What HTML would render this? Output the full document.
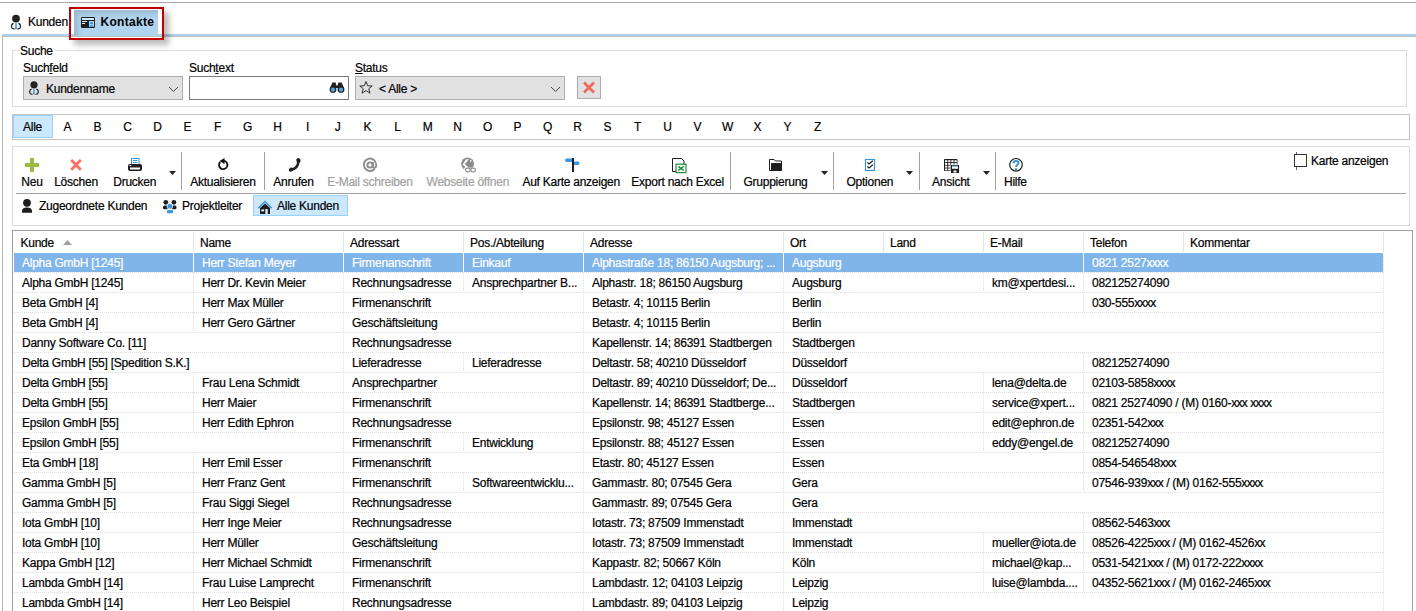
<!DOCTYPE html>
<html><head><meta charset="utf-8"><style>
html,body{margin:0;padding:0;background:#fff;width:1416px;height:611px;overflow:hidden;position:relative}
.t{position:absolute;font-family:"Liberation Sans", sans-serif;font-size:12px;line-height:14px;white-space:nowrap;z-index:5;letter-spacing:-0.25px;-webkit-text-stroke:0.2px currentColor}
.x{letter-spacing:-0.7px}
u{text-decoration:underline;text-underline-offset:1px}
svg.g{position:absolute;left:0;top:0;z-index:0}
</style></head><body>
<svg class="g" width="1416" height="611" viewBox="0 0 1416 611" shape-rendering="auto">
<line x1="0" y1="2.5" x2="1416" y2="2.5" stroke="#a8a8a8" stroke-width="1"/>
<rect x="2" y="34" width="1414" height="2" fill="#aad2f0" />
<line x1="2" y1="36.5" x2="1416" y2="36.5" stroke="#c0c0c0" stroke-width="1"/>
<line x1="2.5" y1="36" x2="2.5" y2="611" stroke="#b4b4b4" stroke-width="1"/>
<g><circle cx="16" cy="18.6" r="3.9" fill="#222"/><path d="M13.6,23.4 C12,23.9 11.3,25.5 11.5,27 C11.7,28.5 13,29.1 14.6,28.9 M18.4,23.4 C20,23.9 20.7,25.5 20.5,27 C20.3,28.5 19,29.1 17.4,28.9" fill="none" stroke="#222" stroke-width="1.2"/><path d="M15.3,22.6 L16.7,22.6 L17,29.2 L15,29.2 Z" fill="#4aa0e0"/></g>
<line x1="12" y1="50.5" x2="20" y2="50.5" stroke="#dcdcdc" stroke-width="1"/>
<line x1="54" y1="50.5" x2="1407" y2="50.5" stroke="#dcdcdc" stroke-width="1"/>
<line x1="12" y1="106.5" x2="1407" y2="106.5" stroke="#dcdcdc" stroke-width="1"/>
<line x1="12.5" y1="50" x2="12.5" y2="107" stroke="#dcdcdc" stroke-width="1"/>
<line x1="1406.5" y1="50" x2="1406.5" y2="107" stroke="#dcdcdc" stroke-width="1"/>
<rect x="23.5" y="76.5" width="159" height="23" fill="#e1e1e1" stroke="#adadad" stroke-width="1" />
<g><circle cx="34" cy="84.8" r="3.6" fill="#222"/><path d="M31.7,89 C30.2,89.5 29.5,91 29.7,92.4 C29.9,93.8 31.1,94.4 32.6,94.2 M36.3,89 C37.8,89.5 38.5,91 38.3,92.4 C38.1,93.8 36.9,94.4 35.4,94.2" fill="none" stroke="#222" stroke-width="1.15"/><path d="M33.35,88.3 L34.65,88.3 L34.9,94.5 L33.1,94.5 Z" fill="#4aa0e0"/></g>
<path d="M169,87 L173.5,91.5 L178,87" fill="none" stroke="#444" stroke-width="1"/>
<rect x="189.5" y="76.5" width="159" height="23" fill="#fff" stroke="#7a7a7a" stroke-width="1" />
<g><path d="M330.2,88 L332.3,82.6 L335.6,82.6 L336.4,85.4 L337.6,85.4 L338.4,82.6 L341.7,82.6 L343.8,88 Z" fill="#222"/><circle cx="333" cy="89.4" r="3.4" fill="#222"/><circle cx="341" cy="89.4" r="3.4" fill="#222"/><circle cx="333" cy="89.7" r="2.1" fill="#4aa8ee"/><circle cx="341" cy="89.7" r="2.1" fill="#4aa8ee"/></g>
<rect x="355.5" y="76.5" width="209" height="23" fill="#e1e1e1" stroke="#adadad" stroke-width="1" />
<path d="M366,81.5 L367.7,85.8 L372.2,86 L368.7,88.8 L370,93.2 L366,90.6 L362,93.2 L363.3,88.8 L359.8,86 L364.3,85.8 Z" fill="none" stroke="#333" stroke-width="1"/>
<path d="M551,87 L555.5,91.5 L560,87" fill="none" stroke="#444" stroke-width="1"/>
<rect x="577.5" y="76.5" width="23" height="22" fill="#e1e1e1" stroke="#adadad" stroke-width="1" />
<path d="M584,82.5 L594,92.5 M594,82.5 L584,92.5" stroke="#f06a5a" stroke-width="2.6"/>
<rect x="12.5" y="114.5" width="1397" height="25" fill="#fff" stroke="#c4c4c4" stroke-width="1" />
<rect x="13.5" y="115.5" width="39" height="22" fill="#cce8ff" stroke="#99d1ff" stroke-width="1" />
<line x1="12" y1="146.5" x2="1410" y2="146.5" stroke="#dcdcdc" stroke-width="1"/>
<line x1="12" y1="225.5" x2="1410" y2="225.5" stroke="#dcdcdc" stroke-width="1"/>
<line x1="12.5" y1="146" x2="12.5" y2="226" stroke="#dcdcdc" stroke-width="1"/>
<line x1="1409.5" y1="146" x2="1409.5" y2="226" stroke="#dcdcdc" stroke-width="1"/>
<line x1="16" y1="193.5" x2="1406" y2="193.5" stroke="#a0a0a0" stroke-width="1"/>
<line x1="181.5" y1="152" x2="181.5" y2="190" stroke="#a0a0a0" stroke-width="1"/>
<line x1="264.5" y1="152" x2="264.5" y2="190" stroke="#a0a0a0" stroke-width="1"/>
<line x1="730.5" y1="152" x2="730.5" y2="190" stroke="#a0a0a0" stroke-width="1"/>
<line x1="833.5" y1="152" x2="833.5" y2="190" stroke="#a0a0a0" stroke-width="1"/>
<line x1="919.5" y1="152" x2="919.5" y2="190" stroke="#a0a0a0" stroke-width="1"/>
<line x1="995.5" y1="152" x2="995.5" y2="190" stroke="#a0a0a0" stroke-width="1"/>
<path d="M169,171 L176,171 L172.5,175 Z" fill="#222"/>
<path d="M821,171 L828,171 L824.5,175 Z" fill="#222"/>
<path d="M983,171 L990,171 L986.5,175 Z" fill="#222"/>
<path d="M906,171 L913,171 L909.5,175 Z" fill="#222"/>
<path d="M30,158 h4 v5 h5 v4 h-5 v5 h-4 v-5 h-5 v-4 h5 Z" fill="#9bbb45"/>
<path d="M71.2,160 L80.8,169.8 M80.8,160 L71.2,169.8" stroke="#ff7060" stroke-width="2.8"/>
<g><rect x="131.5" y="158.5" width="7.5" height="6" fill="#fff" stroke="#3a96dd" stroke-width="1"/><line x1="133" y1="160.5" x2="137.5" y2="160.5" stroke="#3a96dd"/><line x1="133" y1="162.5" x2="137.5" y2="162.5" stroke="#3a96dd"/><rect x="128" y="164" width="14" height="7" rx="2" fill="#1e1e1e"/><rect x="130" y="167.5" width="10" height="2" fill="#fff"/><rect x="129.5" y="165" width="1.8" height="1" fill="#fff"/></g>
<g><path d="M220.2,162 A4.2,4.2 0 1 0 224,160.8" fill="none" stroke="#111" stroke-width="1.8"/><path d="M224.5,158 L219.5,161 L224.5,164 Z" fill="#111"/></g>
<g fill="#1e1e1e"><path d="M298.3,161.5 C298.3,165 296,168.5 291.5,169.8" fill="none" stroke="#1e1e1e" stroke-width="2.5"/><ellipse cx="298.4" cy="160.4" rx="2.1" ry="2.5" transform="rotate(-25 298.4 160.4)"/><ellipse cx="291" cy="169.6" rx="2.4" ry="1.8" transform="rotate(-30 291 169.6)"/></g>
<g fill="none" stroke="#8c8c8c" stroke-width="1.9"><path d="M374.5,169 A6.2,6.2 0 1 1 376.2,164.5 L376.2,166 C376.2,168 373.5,168.5 373,166.5 L373,162"/><circle cx="370" cy="165" r="2.6"/></g>
<g><circle cx="467.6" cy="163.8" r="6.4" fill="#8c8c8c"/><path d="M465.8,159.6 L468.6,159 L466.8,162 L464.6,164 L467.6,166.6 L469.6,168.2 L466,170.5 L464.2,168.6 L465.4,167 L462.6,164.6 Z" fill="#fff"/><path d="M469.8,159.6 L471.8,160.8 L470.2,162.2 Z" fill="#fff"/><rect x="464.6" y="167.6" width="11.4" height="5" fill="#fff"/><rect x="465.6" y="168.2" width="4.6" height="3.6" rx="1.8" fill="none" stroke="#8c8c8c" stroke-width="1.2"/><rect x="470.8" y="168.2" width="4.6" height="3.6" rx="1.8" fill="none" stroke="#8c8c8c" stroke-width="1.2"/></g>
<g><rect x="572" y="158" width="2" height="14" fill="#1e1e1e"/><path d="M572,158.6 L566,158.6 L564.8,160.3 L566,162 L572,162 Z" fill="#3a96dd"/><path d="M574,161.6 L578.5,161.6 L579.7,163.3 L578.5,165 L574,165 Z" fill="#3a96dd"/></g>
<g><path d="M672.5,158.5 L681.5,158.5 L684,161 L684,171.5 L672.5,171.5 Z" fill="#fff" stroke="#1e1e1e" stroke-width="1"/><rect x="676" y="164.2" width="10" height="8.4" fill="#fff" stroke="#1e8c3c" stroke-width="1.2"/><path d="M678.3,166.3 L683.7,170.5 M683.7,166.3 L678.3,170.5" stroke="#1e8c3c" stroke-width="1.5"/></g>
<g><path d="M769.5,159.5 L774,159.5 L775.5,161 L781.5,161 L781.5,170.5 L769.5,170.5 Z" fill="#fff" stroke="#1e1e1e" stroke-width="1"/><rect x="771" y="163" width="11" height="8" rx="0.8" fill="#1e1e1e"/></g>
<g><rect x="865.5" y="159.5" width="9" height="11" fill="#fff" stroke="#3a96dd" stroke-width="1.2"/><path d="M867.3,162.5 L869,164 L872.8,160.8 M867.3,166.5 L869,168 L872.8,164.8" fill="none" stroke="#1e1e1e" stroke-width="1.2"/></g>
<g><rect x="944" y="159" width="13.5" height="12" rx="0.8" fill="#1e1e1e"/><g fill="#fff"><rect x="945.0" y="160.2" width="2.3" height="1.9"/><rect x="945.0" y="162.95" width="2.3" height="1.9"/><rect x="945.0" y="165.7" width="2.3" height="1.9"/><rect x="945.0" y="168.45" width="2.3" height="1.9"/><rect x="948.15" y="160.2" width="2.3" height="1.9"/><rect x="948.15" y="162.95" width="2.3" height="1.9"/><rect x="948.15" y="165.7" width="2.3" height="1.9"/><rect x="948.15" y="168.45" width="2.3" height="1.9"/><rect x="951.3" y="160.2" width="2.3" height="1.9"/><rect x="951.3" y="162.95" width="2.3" height="1.9"/><rect x="951.3" y="165.7" width="2.3" height="1.9"/><rect x="951.3" y="168.45" width="2.3" height="1.9"/><rect x="954.45" y="160.2" width="2.3" height="1.9"/><rect x="954.45" y="162.95" width="2.3" height="1.9"/><rect x="954.45" y="165.7" width="2.3" height="1.9"/><rect x="954.45" y="168.45" width="2.3" height="1.9"/></g><rect x="950.5" y="164.5" width="9" height="9" fill="#fff"/><rect x="951" y="165" width="8" height="8" fill="#1e1e1e"/><rect x="952" y="165.8" width="6" height="3" fill="#fff"/><rect x="952" y="165.8" width="6" height="0.8" fill="#3a96dd"/><rect x="953.5" y="170.5" width="3" height="2" fill="#fff"/></g>
<g><circle cx="1016" cy="164.8" r="6.3" fill="#fff" stroke="#1e1e1e" stroke-width="1.2"/><path d="M1013.5,163 C1013.5,160.2 1018.5,160.2 1018.5,163 C1018.5,164.8 1016,164.8 1016,167" fill="none" stroke="#3a96dd" stroke-width="2"/><rect x="1015" y="168.2" width="2" height="2" fill="#3a96dd"/></g>
<rect x="1294.5" y="154.5" width="12" height="12" fill="#fff" stroke="#333" stroke-width="1" />
<line x1="1296.5" y1="152" x2="1296.5" y2="154" stroke="#666" stroke-width="1"/>
<line x1="1296.5" y1="167" x2="1296.5" y2="170" stroke="#666" stroke-width="1"/>
<g><circle cx="27" cy="202.8" r="3.9" fill="#1e1e1e"/><path d="M22,212.7 C21.5,208.5 24,207.4 27,207.4 C30,207.4 32.5,208.5 32,212.7 Z" fill="#1e1e1e"/></g>
<g><circle cx="165.8" cy="202.3" r="2.4" fill="#1e1e1e"/><circle cx="173.9" cy="202.3" r="2.4" fill="#1e1e1e"/><rect x="163" y="205.5" width="5" height="3.8" rx="1.5" fill="#1e1e1e"/><rect x="171.5" y="205.5" width="5" height="3.8" rx="1.5" fill="#1e1e1e"/><circle cx="169.9" cy="206.3" r="3.1" fill="#fff"/><circle cx="169.9" cy="206.3" r="2.5" fill="#3a96dd"/><rect x="166.8" y="210" width="6.3" height="3.2" rx="1.3" fill="#3a96dd"/></g>
<rect x="253.5" y="195.5" width="94" height="20" fill="#cce8ff" stroke="#99d1ff" stroke-width="1" />
<g><path d="M258.2,208.3 L265,201.6 L271.8,208.3" fill="none" stroke="#3a96dd" stroke-width="1.4"/><path d="M260,214 L260,208 L265,203.5 L270,208 L270,214 L267.8,214 L267.8,209 L265.3,209 L265.3,214 Z" fill="#1e1e1e"/><rect x="261.3" y="209.5" width="2.8" height="1.8" fill="#fff"/></g>
<line x1="12" y1="230.5" x2="1413" y2="230.5" stroke="#a0a0a0" stroke-width="1"/>
<line x1="12.5" y1="230" x2="12.5" y2="611" stroke="#a0a0a0" stroke-width="1"/>
<line x1="1412.5" y1="230" x2="1412.5" y2="611" stroke="#a0a0a0" stroke-width="1"/>
<line x1="193.5" y1="232" x2="193.5" y2="252" stroke="#e5e5e5" stroke-width="1"/>
<line x1="343.5" y1="232" x2="343.5" y2="252" stroke="#e5e5e5" stroke-width="1"/>
<line x1="463.5" y1="232" x2="463.5" y2="252" stroke="#e5e5e5" stroke-width="1"/>
<line x1="583.5" y1="232" x2="583.5" y2="252" stroke="#e5e5e5" stroke-width="1"/>
<line x1="783.5" y1="232" x2="783.5" y2="252" stroke="#e5e5e5" stroke-width="1"/>
<line x1="883.5" y1="232" x2="883.5" y2="252" stroke="#e5e5e5" stroke-width="1"/>
<line x1="983.5" y1="232" x2="983.5" y2="252" stroke="#e5e5e5" stroke-width="1"/>
<line x1="1083.5" y1="232" x2="1083.5" y2="252" stroke="#e5e5e5" stroke-width="1"/>
<line x1="1183.5" y1="232" x2="1183.5" y2="252" stroke="#e5e5e5" stroke-width="1"/>
<line x1="1383.5" y1="232" x2="1383.5" y2="252" stroke="#e5e5e5" stroke-width="1"/>
<path d="M63,245 L67.5,240 L72,245 Z" fill="#a0a0a0"/>
<rect x="14" y="253" width="1369" height="19" fill="#7fb5e9" />
<line x1="193.5" y1="253" x2="193.5" y2="272" stroke="#ffffff" stroke-width="1"/>
<line x1="343.5" y1="253" x2="343.5" y2="272" stroke="#ffffff" stroke-width="1"/>
<line x1="463.5" y1="253" x2="463.5" y2="272" stroke="#ffffff" stroke-width="1"/>
<line x1="583.5" y1="253" x2="583.5" y2="272" stroke="#ffffff" stroke-width="1"/>
<line x1="783.5" y1="253" x2="783.5" y2="272" stroke="#ffffff" stroke-width="1"/>
<line x1="1083.5" y1="253" x2="1083.5" y2="272" stroke="#ffffff" stroke-width="1"/>
<line x1="1383.5" y1="252" x2="1383.5" y2="272" stroke="#dfdfdf" stroke-width="1" stroke-dasharray="1 1"/>
<line x1="14" y1="272.5" x2="1383" y2="272.5" stroke="#dfdfdf" stroke-width="1" stroke-dasharray="1 1"/>
<line x1="193.5" y1="272" x2="193.5" y2="292" stroke="#dfdfdf" stroke-width="1" stroke-dasharray="1 1"/>
<line x1="343.5" y1="272" x2="343.5" y2="292" stroke="#dfdfdf" stroke-width="1" stroke-dasharray="1 1"/>
<line x1="463.5" y1="272" x2="463.5" y2="292" stroke="#dfdfdf" stroke-width="1" stroke-dasharray="1 1"/>
<line x1="583.5" y1="272" x2="583.5" y2="292" stroke="#dfdfdf" stroke-width="1" stroke-dasharray="1 1"/>
<line x1="783.5" y1="272" x2="783.5" y2="292" stroke="#dfdfdf" stroke-width="1" stroke-dasharray="1 1"/>
<line x1="983.5" y1="272" x2="983.5" y2="292" stroke="#dfdfdf" stroke-width="1" stroke-dasharray="1 1"/>
<line x1="1083.5" y1="272" x2="1083.5" y2="292" stroke="#dfdfdf" stroke-width="1" stroke-dasharray="1 1"/>
<line x1="1383.5" y1="272" x2="1383.5" y2="292" stroke="#dfdfdf" stroke-width="1" stroke-dasharray="1 1"/>
<line x1="14" y1="292.5" x2="1383" y2="292.5" stroke="#dfdfdf" stroke-width="1" stroke-dasharray="1 1"/>
<line x1="193.5" y1="292" x2="193.5" y2="312" stroke="#dfdfdf" stroke-width="1" stroke-dasharray="1 1"/>
<line x1="343.5" y1="292" x2="343.5" y2="312" stroke="#dfdfdf" stroke-width="1" stroke-dasharray="1 1"/>
<line x1="583.5" y1="292" x2="583.5" y2="312" stroke="#dfdfdf" stroke-width="1" stroke-dasharray="1 1"/>
<line x1="783.5" y1="292" x2="783.5" y2="312" stroke="#dfdfdf" stroke-width="1" stroke-dasharray="1 1"/>
<line x1="1083.5" y1="292" x2="1083.5" y2="312" stroke="#dfdfdf" stroke-width="1" stroke-dasharray="1 1"/>
<line x1="1383.5" y1="292" x2="1383.5" y2="312" stroke="#dfdfdf" stroke-width="1" stroke-dasharray="1 1"/>
<line x1="14" y1="312.5" x2="1383" y2="312.5" stroke="#dfdfdf" stroke-width="1" stroke-dasharray="1 1"/>
<line x1="193.5" y1="312" x2="193.5" y2="332" stroke="#dfdfdf" stroke-width="1" stroke-dasharray="1 1"/>
<line x1="343.5" y1="312" x2="343.5" y2="332" stroke="#dfdfdf" stroke-width="1" stroke-dasharray="1 1"/>
<line x1="583.5" y1="312" x2="583.5" y2="332" stroke="#dfdfdf" stroke-width="1" stroke-dasharray="1 1"/>
<line x1="783.5" y1="312" x2="783.5" y2="332" stroke="#dfdfdf" stroke-width="1" stroke-dasharray="1 1"/>
<line x1="1383.5" y1="312" x2="1383.5" y2="332" stroke="#dfdfdf" stroke-width="1" stroke-dasharray="1 1"/>
<line x1="14" y1="332.5" x2="1383" y2="332.5" stroke="#dfdfdf" stroke-width="1" stroke-dasharray="1 1"/>
<line x1="343.5" y1="332" x2="343.5" y2="352" stroke="#dfdfdf" stroke-width="1" stroke-dasharray="1 1"/>
<line x1="583.5" y1="332" x2="583.5" y2="352" stroke="#dfdfdf" stroke-width="1" stroke-dasharray="1 1"/>
<line x1="783.5" y1="332" x2="783.5" y2="352" stroke="#dfdfdf" stroke-width="1" stroke-dasharray="1 1"/>
<line x1="1383.5" y1="332" x2="1383.5" y2="352" stroke="#dfdfdf" stroke-width="1" stroke-dasharray="1 1"/>
<line x1="14" y1="352.5" x2="1383" y2="352.5" stroke="#dfdfdf" stroke-width="1" stroke-dasharray="1 1"/>
<line x1="343.5" y1="352" x2="343.5" y2="372" stroke="#dfdfdf" stroke-width="1" stroke-dasharray="1 1"/>
<line x1="463.5" y1="352" x2="463.5" y2="372" stroke="#dfdfdf" stroke-width="1" stroke-dasharray="1 1"/>
<line x1="583.5" y1="352" x2="583.5" y2="372" stroke="#dfdfdf" stroke-width="1" stroke-dasharray="1 1"/>
<line x1="783.5" y1="352" x2="783.5" y2="372" stroke="#dfdfdf" stroke-width="1" stroke-dasharray="1 1"/>
<line x1="1083.5" y1="352" x2="1083.5" y2="372" stroke="#dfdfdf" stroke-width="1" stroke-dasharray="1 1"/>
<line x1="1383.5" y1="352" x2="1383.5" y2="372" stroke="#dfdfdf" stroke-width="1" stroke-dasharray="1 1"/>
<line x1="14" y1="372.5" x2="1383" y2="372.5" stroke="#dfdfdf" stroke-width="1" stroke-dasharray="1 1"/>
<line x1="193.5" y1="372" x2="193.5" y2="392" stroke="#dfdfdf" stroke-width="1" stroke-dasharray="1 1"/>
<line x1="343.5" y1="372" x2="343.5" y2="392" stroke="#dfdfdf" stroke-width="1" stroke-dasharray="1 1"/>
<line x1="583.5" y1="372" x2="583.5" y2="392" stroke="#dfdfdf" stroke-width="1" stroke-dasharray="1 1"/>
<line x1="783.5" y1="372" x2="783.5" y2="392" stroke="#dfdfdf" stroke-width="1" stroke-dasharray="1 1"/>
<line x1="983.5" y1="372" x2="983.5" y2="392" stroke="#dfdfdf" stroke-width="1" stroke-dasharray="1 1"/>
<line x1="1083.5" y1="372" x2="1083.5" y2="392" stroke="#dfdfdf" stroke-width="1" stroke-dasharray="1 1"/>
<line x1="1383.5" y1="372" x2="1383.5" y2="392" stroke="#dfdfdf" stroke-width="1" stroke-dasharray="1 1"/>
<line x1="14" y1="392.5" x2="1383" y2="392.5" stroke="#dfdfdf" stroke-width="1" stroke-dasharray="1 1"/>
<line x1="193.5" y1="392" x2="193.5" y2="412" stroke="#dfdfdf" stroke-width="1" stroke-dasharray="1 1"/>
<line x1="343.5" y1="392" x2="343.5" y2="412" stroke="#dfdfdf" stroke-width="1" stroke-dasharray="1 1"/>
<line x1="583.5" y1="392" x2="583.5" y2="412" stroke="#dfdfdf" stroke-width="1" stroke-dasharray="1 1"/>
<line x1="783.5" y1="392" x2="783.5" y2="412" stroke="#dfdfdf" stroke-width="1" stroke-dasharray="1 1"/>
<line x1="983.5" y1="392" x2="983.5" y2="412" stroke="#dfdfdf" stroke-width="1" stroke-dasharray="1 1"/>
<line x1="1083.5" y1="392" x2="1083.5" y2="412" stroke="#dfdfdf" stroke-width="1" stroke-dasharray="1 1"/>
<line x1="1383.5" y1="392" x2="1383.5" y2="412" stroke="#dfdfdf" stroke-width="1" stroke-dasharray="1 1"/>
<line x1="14" y1="412.5" x2="1383" y2="412.5" stroke="#dfdfdf" stroke-width="1" stroke-dasharray="1 1"/>
<line x1="193.5" y1="412" x2="193.5" y2="432" stroke="#dfdfdf" stroke-width="1" stroke-dasharray="1 1"/>
<line x1="343.5" y1="412" x2="343.5" y2="432" stroke="#dfdfdf" stroke-width="1" stroke-dasharray="1 1"/>
<line x1="583.5" y1="412" x2="583.5" y2="432" stroke="#dfdfdf" stroke-width="1" stroke-dasharray="1 1"/>
<line x1="783.5" y1="412" x2="783.5" y2="432" stroke="#dfdfdf" stroke-width="1" stroke-dasharray="1 1"/>
<line x1="983.5" y1="412" x2="983.5" y2="432" stroke="#dfdfdf" stroke-width="1" stroke-dasharray="1 1"/>
<line x1="1083.5" y1="412" x2="1083.5" y2="432" stroke="#dfdfdf" stroke-width="1" stroke-dasharray="1 1"/>
<line x1="1383.5" y1="412" x2="1383.5" y2="432" stroke="#dfdfdf" stroke-width="1" stroke-dasharray="1 1"/>
<line x1="14" y1="432.5" x2="1383" y2="432.5" stroke="#dfdfdf" stroke-width="1" stroke-dasharray="1 1"/>
<line x1="343.5" y1="432" x2="343.5" y2="452" stroke="#dfdfdf" stroke-width="1" stroke-dasharray="1 1"/>
<line x1="463.5" y1="432" x2="463.5" y2="452" stroke="#dfdfdf" stroke-width="1" stroke-dasharray="1 1"/>
<line x1="583.5" y1="432" x2="583.5" y2="452" stroke="#dfdfdf" stroke-width="1" stroke-dasharray="1 1"/>
<line x1="783.5" y1="432" x2="783.5" y2="452" stroke="#dfdfdf" stroke-width="1" stroke-dasharray="1 1"/>
<line x1="983.5" y1="432" x2="983.5" y2="452" stroke="#dfdfdf" stroke-width="1" stroke-dasharray="1 1"/>
<line x1="1083.5" y1="432" x2="1083.5" y2="452" stroke="#dfdfdf" stroke-width="1" stroke-dasharray="1 1"/>
<line x1="1383.5" y1="432" x2="1383.5" y2="452" stroke="#dfdfdf" stroke-width="1" stroke-dasharray="1 1"/>
<line x1="14" y1="452.5" x2="1383" y2="452.5" stroke="#dfdfdf" stroke-width="1" stroke-dasharray="1 1"/>
<line x1="193.5" y1="452" x2="193.5" y2="472" stroke="#dfdfdf" stroke-width="1" stroke-dasharray="1 1"/>
<line x1="343.5" y1="452" x2="343.5" y2="472" stroke="#dfdfdf" stroke-width="1" stroke-dasharray="1 1"/>
<line x1="583.5" y1="452" x2="583.5" y2="472" stroke="#dfdfdf" stroke-width="1" stroke-dasharray="1 1"/>
<line x1="783.5" y1="452" x2="783.5" y2="472" stroke="#dfdfdf" stroke-width="1" stroke-dasharray="1 1"/>
<line x1="1083.5" y1="452" x2="1083.5" y2="472" stroke="#dfdfdf" stroke-width="1" stroke-dasharray="1 1"/>
<line x1="1383.5" y1="452" x2="1383.5" y2="472" stroke="#dfdfdf" stroke-width="1" stroke-dasharray="1 1"/>
<line x1="14" y1="472.5" x2="1383" y2="472.5" stroke="#dfdfdf" stroke-width="1" stroke-dasharray="1 1"/>
<line x1="193.5" y1="472" x2="193.5" y2="492" stroke="#dfdfdf" stroke-width="1" stroke-dasharray="1 1"/>
<line x1="343.5" y1="472" x2="343.5" y2="492" stroke="#dfdfdf" stroke-width="1" stroke-dasharray="1 1"/>
<line x1="463.5" y1="472" x2="463.5" y2="492" stroke="#dfdfdf" stroke-width="1" stroke-dasharray="1 1"/>
<line x1="583.5" y1="472" x2="583.5" y2="492" stroke="#dfdfdf" stroke-width="1" stroke-dasharray="1 1"/>
<line x1="783.5" y1="472" x2="783.5" y2="492" stroke="#dfdfdf" stroke-width="1" stroke-dasharray="1 1"/>
<line x1="1083.5" y1="472" x2="1083.5" y2="492" stroke="#dfdfdf" stroke-width="1" stroke-dasharray="1 1"/>
<line x1="1383.5" y1="472" x2="1383.5" y2="492" stroke="#dfdfdf" stroke-width="1" stroke-dasharray="1 1"/>
<line x1="14" y1="492.5" x2="1383" y2="492.5" stroke="#dfdfdf" stroke-width="1" stroke-dasharray="1 1"/>
<line x1="193.5" y1="492" x2="193.5" y2="512" stroke="#dfdfdf" stroke-width="1" stroke-dasharray="1 1"/>
<line x1="343.5" y1="492" x2="343.5" y2="512" stroke="#dfdfdf" stroke-width="1" stroke-dasharray="1 1"/>
<line x1="583.5" y1="492" x2="583.5" y2="512" stroke="#dfdfdf" stroke-width="1" stroke-dasharray="1 1"/>
<line x1="783.5" y1="492" x2="783.5" y2="512" stroke="#dfdfdf" stroke-width="1" stroke-dasharray="1 1"/>
<line x1="1383.5" y1="492" x2="1383.5" y2="512" stroke="#dfdfdf" stroke-width="1" stroke-dasharray="1 1"/>
<line x1="14" y1="512.5" x2="1383" y2="512.5" stroke="#dfdfdf" stroke-width="1" stroke-dasharray="1 1"/>
<line x1="193.5" y1="512" x2="193.5" y2="532" stroke="#dfdfdf" stroke-width="1" stroke-dasharray="1 1"/>
<line x1="343.5" y1="512" x2="343.5" y2="532" stroke="#dfdfdf" stroke-width="1" stroke-dasharray="1 1"/>
<line x1="583.5" y1="512" x2="583.5" y2="532" stroke="#dfdfdf" stroke-width="1" stroke-dasharray="1 1"/>
<line x1="783.5" y1="512" x2="783.5" y2="532" stroke="#dfdfdf" stroke-width="1" stroke-dasharray="1 1"/>
<line x1="1083.5" y1="512" x2="1083.5" y2="532" stroke="#dfdfdf" stroke-width="1" stroke-dasharray="1 1"/>
<line x1="1383.5" y1="512" x2="1383.5" y2="532" stroke="#dfdfdf" stroke-width="1" stroke-dasharray="1 1"/>
<line x1="14" y1="532.5" x2="1383" y2="532.5" stroke="#dfdfdf" stroke-width="1" stroke-dasharray="1 1"/>
<line x1="193.5" y1="532" x2="193.5" y2="552" stroke="#dfdfdf" stroke-width="1" stroke-dasharray="1 1"/>
<line x1="343.5" y1="532" x2="343.5" y2="552" stroke="#dfdfdf" stroke-width="1" stroke-dasharray="1 1"/>
<line x1="583.5" y1="532" x2="583.5" y2="552" stroke="#dfdfdf" stroke-width="1" stroke-dasharray="1 1"/>
<line x1="783.5" y1="532" x2="783.5" y2="552" stroke="#dfdfdf" stroke-width="1" stroke-dasharray="1 1"/>
<line x1="983.5" y1="532" x2="983.5" y2="552" stroke="#dfdfdf" stroke-width="1" stroke-dasharray="1 1"/>
<line x1="1083.5" y1="532" x2="1083.5" y2="552" stroke="#dfdfdf" stroke-width="1" stroke-dasharray="1 1"/>
<line x1="1383.5" y1="532" x2="1383.5" y2="552" stroke="#dfdfdf" stroke-width="1" stroke-dasharray="1 1"/>
<line x1="14" y1="552.5" x2="1383" y2="552.5" stroke="#dfdfdf" stroke-width="1" stroke-dasharray="1 1"/>
<line x1="193.5" y1="552" x2="193.5" y2="572" stroke="#dfdfdf" stroke-width="1" stroke-dasharray="1 1"/>
<line x1="343.5" y1="552" x2="343.5" y2="572" stroke="#dfdfdf" stroke-width="1" stroke-dasharray="1 1"/>
<line x1="583.5" y1="552" x2="583.5" y2="572" stroke="#dfdfdf" stroke-width="1" stroke-dasharray="1 1"/>
<line x1="783.5" y1="552" x2="783.5" y2="572" stroke="#dfdfdf" stroke-width="1" stroke-dasharray="1 1"/>
<line x1="983.5" y1="552" x2="983.5" y2="572" stroke="#dfdfdf" stroke-width="1" stroke-dasharray="1 1"/>
<line x1="1083.5" y1="552" x2="1083.5" y2="572" stroke="#dfdfdf" stroke-width="1" stroke-dasharray="1 1"/>
<line x1="1383.5" y1="552" x2="1383.5" y2="572" stroke="#dfdfdf" stroke-width="1" stroke-dasharray="1 1"/>
<line x1="14" y1="572.5" x2="1383" y2="572.5" stroke="#dfdfdf" stroke-width="1" stroke-dasharray="1 1"/>
<line x1="193.5" y1="572" x2="193.5" y2="592" stroke="#dfdfdf" stroke-width="1" stroke-dasharray="1 1"/>
<line x1="343.5" y1="572" x2="343.5" y2="592" stroke="#dfdfdf" stroke-width="1" stroke-dasharray="1 1"/>
<line x1="583.5" y1="572" x2="583.5" y2="592" stroke="#dfdfdf" stroke-width="1" stroke-dasharray="1 1"/>
<line x1="783.5" y1="572" x2="783.5" y2="592" stroke="#dfdfdf" stroke-width="1" stroke-dasharray="1 1"/>
<line x1="983.5" y1="572" x2="983.5" y2="592" stroke="#dfdfdf" stroke-width="1" stroke-dasharray="1 1"/>
<line x1="1083.5" y1="572" x2="1083.5" y2="592" stroke="#dfdfdf" stroke-width="1" stroke-dasharray="1 1"/>
<line x1="1383.5" y1="572" x2="1383.5" y2="592" stroke="#dfdfdf" stroke-width="1" stroke-dasharray="1 1"/>
<line x1="14" y1="592.5" x2="1383" y2="592.5" stroke="#dfdfdf" stroke-width="1" stroke-dasharray="1 1"/>
<line x1="193.5" y1="592" x2="193.5" y2="612" stroke="#dfdfdf" stroke-width="1" stroke-dasharray="1 1"/>
<line x1="343.5" y1="592" x2="343.5" y2="612" stroke="#dfdfdf" stroke-width="1" stroke-dasharray="1 1"/>
<line x1="583.5" y1="592" x2="583.5" y2="612" stroke="#dfdfdf" stroke-width="1" stroke-dasharray="1 1"/>
<line x1="783.5" y1="592" x2="783.5" y2="612" stroke="#dfdfdf" stroke-width="1" stroke-dasharray="1 1"/>
<line x1="1383.5" y1="592" x2="1383.5" y2="612" stroke="#dfdfdf" stroke-width="1" stroke-dasharray="1 1"/>
<line x1="14" y1="612.5" x2="1383" y2="612.5" stroke="#dfdfdf" stroke-width="1" stroke-dasharray="1 1"/>
</svg>
<div class="t" style="left:28px;top:15px;color:#000;">Kunden</div>
<div style="position:absolute;left:69px;top:7px;width:91px;height:29px;border:2px solid #c00000;box-shadow:5px 5px 6px rgba(0,0,0,0.27);z-index:1"></div>
<div style="position:absolute;left:74px;top:10px;width:84px;height:26px;background:#b0d4ef;box-shadow:inset 4px 4px 5px rgba(0,0,0,0.12);z-index:1"></div>
<div style="position:absolute;left:71px;top:36px;width:91px;height:1px;background:#c0c0c0;z-index:1"></div>
<svg style="position:absolute;left:0;top:0;z-index:2" width="200" height="40"><rect x="81" y="17" width="14" height="11" rx="1.2" fill="#1e1e1e"/><rect x="82" y="18" width="12" height="2" fill="#cfeaff"/><rect x="82" y="21" width="5" height="1" fill="#e8f4ff"/><rect x="82" y="23" width="3" height="1" fill="#e8f4ff"/><rect x="89" y="21" width="5" height="6" fill="#b6dcfa"/><circle cx="91.5" cy="23.2" r="1.4" fill="#3a96dd"/><path d="M89.6,27 L89.8,25.3 L93.2,25.3 L93.4,27 Z" fill="#3a96dd"/></svg>
<div class="t" style="left:100.5px;top:15px;color:#000;font-weight:bold;z-index:3;letter-spacing:0.3px;-webkit-text-stroke:0;">Kontakte</div>
<div class="t" style="left:20px;top:44px;color:#000;">Suche</div>
<div class="t" style="left:23px;top:61px;color:#000;">Such<u>f</u>eld</div>
<div class="t" style="left:189px;top:61px;color:#000;">Such<u>t</u>ext</div>
<div class="t" style="left:355px;top:61px;color:#000;"><u>S</u>tatus</div>
<div class="t" style="left:46px;top:82px;color:#000;">Kundenname</div>
<div class="t" style="left:379px;top:82px;color:#000;">&lt; Alle &gt;</div>
<div class="t" style="left:23px;top:120px;color:#000;">Alle</div>
<div class="t" style="left:-82.5px;width:300px;text-align:center;top:120px;color:#000;">A</div>
<div class="t" style="left:-52.5px;width:300px;text-align:center;top:120px;color:#000;">B</div>
<div class="t" style="left:-22.5px;width:300px;text-align:center;top:120px;color:#000;">C</div>
<div class="t" style="left:7.5px;width:300px;text-align:center;top:120px;color:#000;">D</div>
<div class="t" style="left:37.5px;width:300px;text-align:center;top:120px;color:#000;">E</div>
<div class="t" style="left:67.5px;width:300px;text-align:center;top:120px;color:#000;">F</div>
<div class="t" style="left:97.5px;width:300px;text-align:center;top:120px;color:#000;">G</div>
<div class="t" style="left:127.5px;width:300px;text-align:center;top:120px;color:#000;">H</div>
<div class="t" style="left:157.5px;width:300px;text-align:center;top:120px;color:#000;">I</div>
<div class="t" style="left:187.5px;width:300px;text-align:center;top:120px;color:#000;">J</div>
<div class="t" style="left:217.5px;width:300px;text-align:center;top:120px;color:#000;">K</div>
<div class="t" style="left:247.5px;width:300px;text-align:center;top:120px;color:#000;">L</div>
<div class="t" style="left:277.5px;width:300px;text-align:center;top:120px;color:#000;">M</div>
<div class="t" style="left:307.5px;width:300px;text-align:center;top:120px;color:#000;">N</div>
<div class="t" style="left:337.5px;width:300px;text-align:center;top:120px;color:#000;">O</div>
<div class="t" style="left:367.5px;width:300px;text-align:center;top:120px;color:#000;">P</div>
<div class="t" style="left:397.5px;width:300px;text-align:center;top:120px;color:#000;">Q</div>
<div class="t" style="left:427.5px;width:300px;text-align:center;top:120px;color:#000;">R</div>
<div class="t" style="left:457.5px;width:300px;text-align:center;top:120px;color:#000;">S</div>
<div class="t" style="left:487.5px;width:300px;text-align:center;top:120px;color:#000;">T</div>
<div class="t" style="left:517.5px;width:300px;text-align:center;top:120px;color:#000;">U</div>
<div class="t" style="left:547.5px;width:300px;text-align:center;top:120px;color:#000;">V</div>
<div class="t" style="left:577.5px;width:300px;text-align:center;top:120px;color:#000;">W</div>
<div class="t" style="left:607.5px;width:300px;text-align:center;top:120px;color:#000;">X</div>
<div class="t" style="left:637.5px;width:300px;text-align:center;top:120px;color:#000;">Y</div>
<div class="t" style="left:667.5px;width:300px;text-align:center;top:120px;color:#000;">Z</div>
<div class="t" style="left:-118px;width:300px;text-align:center;top:175px;color:#000;">Neu</div>
<div class="t" style="left:-74px;width:300px;text-align:center;top:175px;color:#000;">Löschen</div>
<div class="t" style="left:-15.300000000000011px;width:300px;text-align:center;top:175px;color:#000;">Drucken</div>
<div class="t" style="left:72.9px;width:300px;text-align:center;top:175px;color:#000;">Aktualisieren</div>
<div class="t" style="left:143.5px;width:300px;text-align:center;top:175px;color:#000;">Anrufen</div>
<div class="t" style="left:219.89999999999998px;width:300px;text-align:center;top:175px;color:#a0a0a0;">E-Mail schreiben</div>
<div class="t" style="left:317.8px;width:300px;text-align:center;top:175px;color:#a0a0a0;">Webseite öffnen</div>
<div class="t" style="left:421.20000000000005px;width:300px;text-align:center;top:175px;color:#000;">Auf Karte anzeigen</div>
<div class="t" style="left:527.6px;width:300px;text-align:center;top:175px;color:#000;">Export nach Excel</div>
<div class="t" style="left:625.5px;width:300px;text-align:center;top:175px;color:#000;">Gruppierung</div>
<div class="t" style="left:719.9px;width:300px;text-align:center;top:175px;color:#000;">Optionen</div>
<div class="t" style="left:800.9px;width:300px;text-align:center;top:175px;color:#000;">Ansicht</div>
<div class="t" style="left:865.4px;width:300px;text-align:center;top:175px;color:#000;">Hilfe</div>
<div class="t" style="left:1311px;top:154px;color:#000;">Karte anzeigen</div>
<div class="t" style="left:39px;top:199px;color:#000;">Zugeordnete Kunden</div>
<div class="t" style="left:182px;top:199px;color:#000;">Projektleiter</div>
<div class="t" style="left:277px;top:199px;color:#000;">Alle Kunden</div>
<div class="t" style="left:20.5px;top:236px;color:#000;">Kunde</div>
<div class="t" style="left:200px;top:236px;color:#000;">Name</div>
<div class="t" style="left:350px;top:236px;color:#000;">Adressart</div>
<div class="t" style="left:470px;top:236px;color:#000;">Pos./Abteilung</div>
<div class="t" style="left:590px;top:236px;color:#000;">Adresse</div>
<div class="t" style="left:790px;top:236px;color:#000;">Ort</div>
<div class="t" style="left:890px;top:236px;color:#000;">Land</div>
<div class="t" style="left:990px;top:236px;color:#000;">E-Mail</div>
<div class="t" style="left:1090px;top:236px;color:#000;">Telefon</div>
<div class="t" style="left:1190px;top:236px;color:#000;">Kommentar</div>
<div class="t" style="left:22px;top:256px;color:#fff;width:170px;overflow:hidden;">Alpha GmbH [1245]</div>
<div class="t" style="left:202px;top:256px;color:#fff;width:140px;overflow:hidden;">Herr Stefan Meyer</div>
<div class="t" style="left:352px;top:256px;color:#fff;width:110px;overflow:hidden;">Firmenanschrift</div>
<div class="t" style="left:472px;top:256px;color:#fff;width:110px;overflow:hidden;">Einkauf</div>
<div class="t" style="left:592px;top:256px;color:#fff;width:190px;overflow:hidden;">Alphastraße 18; 86150 Augsburg; ...</div>
<div class="t" style="left:792px;top:256px;color:#fff;width:290px;overflow:hidden;">Augsburg</div>
<div class="t" style="left:1092px;top:256px;color:#fff;width:290px;overflow:hidden;">0821 2527<span class="x">xxxx</span></div>
<div class="t" style="left:22px;top:276px;color:#000;width:170px;overflow:hidden;">Alpha GmbH [1245]</div>
<div class="t" style="left:202px;top:276px;color:#000;width:140px;overflow:hidden;">Herr Dr. Kevin Meier</div>
<div class="t" style="left:352px;top:276px;color:#000;width:110px;overflow:hidden;">Rechnungsadresse</div>
<div class="t" style="left:472px;top:276px;color:#000;width:110px;overflow:hidden;">Ansprechpartner B...</div>
<div class="t" style="left:592px;top:276px;color:#000;width:190px;overflow:hidden;">Alphastr. 18; 86150 Augsburg</div>
<div class="t" style="left:792px;top:276px;color:#000;width:190px;overflow:hidden;">Augsburg</div>
<div class="t" style="left:992px;top:276px;color:#000;width:90px;overflow:hidden;">km@xpertdesi...</div>
<div class="t" style="left:1092px;top:276px;color:#000;width:290px;overflow:hidden;">082125274090</div>
<div class="t" style="left:22px;top:296px;color:#000;width:170px;overflow:hidden;">Beta GmbH [4]</div>
<div class="t" style="left:202px;top:296px;color:#000;width:140px;overflow:hidden;">Herr Max Müller</div>
<div class="t" style="left:352px;top:296px;color:#000;width:230px;overflow:hidden;">Firmenanschrift</div>
<div class="t" style="left:592px;top:296px;color:#000;width:190px;overflow:hidden;">Betastr. 4; 10115 Berlin</div>
<div class="t" style="left:792px;top:296px;color:#000;width:290px;overflow:hidden;">Berlin</div>
<div class="t" style="left:1092px;top:296px;color:#000;width:290px;overflow:hidden;">030-555<span class="x">xxxx</span></div>
<div class="t" style="left:22px;top:316px;color:#000;width:170px;overflow:hidden;">Beta GmbH [4]</div>
<div class="t" style="left:202px;top:316px;color:#000;width:140px;overflow:hidden;">Herr Gero Gärtner</div>
<div class="t" style="left:352px;top:316px;color:#000;width:230px;overflow:hidden;">Geschäftsleitung</div>
<div class="t" style="left:592px;top:316px;color:#000;width:190px;overflow:hidden;">Betastr. 4; 10115 Berlin</div>
<div class="t" style="left:792px;top:316px;color:#000;width:590px;overflow:hidden;">Berlin</div>
<div class="t" style="left:22px;top:336px;color:#000;width:320px;overflow:hidden;">Danny Software Co. [11]</div>
<div class="t" style="left:352px;top:336px;color:#000;width:230px;overflow:hidden;">Rechnungsadresse</div>
<div class="t" style="left:592px;top:336px;color:#000;width:190px;overflow:hidden;">Kapellenstr. 14; 86391 Stadtbergen</div>
<div class="t" style="left:792px;top:336px;color:#000;width:590px;overflow:hidden;">Stadtbergen</div>
<div class="t" style="left:22px;top:356px;color:#000;width:320px;overflow:hidden;">Delta GmbH [55] [Spedition S.K.]</div>
<div class="t" style="left:352px;top:356px;color:#000;width:110px;overflow:hidden;">Lieferadresse</div>
<div class="t" style="left:472px;top:356px;color:#000;width:110px;overflow:hidden;">Lieferadresse</div>
<div class="t" style="left:592px;top:356px;color:#000;width:190px;overflow:hidden;">Deltastr. 58; 40210 Düsseldorf</div>
<div class="t" style="left:792px;top:356px;color:#000;width:290px;overflow:hidden;">Düsseldorf</div>
<div class="t" style="left:1092px;top:356px;color:#000;width:290px;overflow:hidden;">082125274090</div>
<div class="t" style="left:22px;top:376px;color:#000;width:170px;overflow:hidden;">Delta GmbH [55]</div>
<div class="t" style="left:202px;top:376px;color:#000;width:140px;overflow:hidden;">Frau Lena Schmidt</div>
<div class="t" style="left:352px;top:376px;color:#000;width:230px;overflow:hidden;">Ansprechpartner</div>
<div class="t" style="left:592px;top:376px;color:#000;width:190px;overflow:hidden;">Deltastr. 89; 40210 Düsseldorf; De...</div>
<div class="t" style="left:792px;top:376px;color:#000;width:190px;overflow:hidden;">Düsseldorf</div>
<div class="t" style="left:992px;top:376px;color:#000;width:90px;overflow:hidden;">lena@delta.de</div>
<div class="t" style="left:1092px;top:376px;color:#000;width:290px;overflow:hidden;">02103-5858<span class="x">xxxx</span></div>
<div class="t" style="left:22px;top:396px;color:#000;width:170px;overflow:hidden;">Delta GmbH [55]</div>
<div class="t" style="left:202px;top:396px;color:#000;width:140px;overflow:hidden;">Herr Maier</div>
<div class="t" style="left:352px;top:396px;color:#000;width:230px;overflow:hidden;">Firmenanschrift</div>
<div class="t" style="left:592px;top:396px;color:#000;width:190px;overflow:hidden;">Kapellenstr. 14; 86391 Stadtberge...</div>
<div class="t" style="left:792px;top:396px;color:#000;width:190px;overflow:hidden;">Stadtbergen</div>
<div class="t" style="left:992px;top:396px;color:#000;width:90px;overflow:hidden;">service@xpert...</div>
<div class="t" style="left:1092px;top:396px;color:#000;width:290px;overflow:hidden;">0821 25274090 / (M) 0160-<span class="x">xxx</span> <span class="x">xxxx</span></div>
<div class="t" style="left:22px;top:416px;color:#000;width:170px;overflow:hidden;">Epsilon GmbH [55]</div>
<div class="t" style="left:202px;top:416px;color:#000;width:140px;overflow:hidden;">Herr Edith Ephron</div>
<div class="t" style="left:352px;top:416px;color:#000;width:230px;overflow:hidden;">Rechnungsadresse</div>
<div class="t" style="left:592px;top:416px;color:#000;width:190px;overflow:hidden;">Epsilonstr. 98; 45127 Essen</div>
<div class="t" style="left:792px;top:416px;color:#000;width:190px;overflow:hidden;">Essen</div>
<div class="t" style="left:992px;top:416px;color:#000;width:90px;overflow:hidden;">edit@ephron.de</div>
<div class="t" style="left:1092px;top:416px;color:#000;width:290px;overflow:hidden;">02351-542<span class="x">xxx</span></div>
<div class="t" style="left:22px;top:436px;color:#000;width:320px;overflow:hidden;">Epsilon GmbH [55]</div>
<div class="t" style="left:352px;top:436px;color:#000;width:110px;overflow:hidden;">Firmenanschrift</div>
<div class="t" style="left:472px;top:436px;color:#000;width:110px;overflow:hidden;">Entwicklung</div>
<div class="t" style="left:592px;top:436px;color:#000;width:190px;overflow:hidden;">Epsilonstr. 88; 45127 Essen</div>
<div class="t" style="left:792px;top:436px;color:#000;width:190px;overflow:hidden;">Essen</div>
<div class="t" style="left:992px;top:436px;color:#000;width:90px;overflow:hidden;">eddy@engel.de</div>
<div class="t" style="left:1092px;top:436px;color:#000;width:290px;overflow:hidden;">082125274090</div>
<div class="t" style="left:22px;top:456px;color:#000;width:170px;overflow:hidden;">Eta GmbH [18]</div>
<div class="t" style="left:202px;top:456px;color:#000;width:140px;overflow:hidden;">Herr Emil Esser</div>
<div class="t" style="left:352px;top:456px;color:#000;width:230px;overflow:hidden;">Firmenanschrift</div>
<div class="t" style="left:592px;top:456px;color:#000;width:190px;overflow:hidden;">Etastr. 80; 45127 Essen</div>
<div class="t" style="left:792px;top:456px;color:#000;width:290px;overflow:hidden;">Essen</div>
<div class="t" style="left:1092px;top:456px;color:#000;width:290px;overflow:hidden;">0854-546548<span class="x">xxx</span></div>
<div class="t" style="left:22px;top:476px;color:#000;width:170px;overflow:hidden;">Gamma GmbH [5]</div>
<div class="t" style="left:202px;top:476px;color:#000;width:140px;overflow:hidden;">Herr Franz Gent</div>
<div class="t" style="left:352px;top:476px;color:#000;width:110px;overflow:hidden;">Firmenanschrift</div>
<div class="t" style="left:472px;top:476px;color:#000;width:110px;overflow:hidden;">Softwareentwicklu...</div>
<div class="t" style="left:592px;top:476px;color:#000;width:190px;overflow:hidden;">Gammastr. 80; 07545 Gera</div>
<div class="t" style="left:792px;top:476px;color:#000;width:290px;overflow:hidden;">Gera</div>
<div class="t" style="left:1092px;top:476px;color:#000;width:290px;overflow:hidden;">07546-939<span class="x">xxx</span> / (M) 0162-555<span class="x">xxxx</span></div>
<div class="t" style="left:22px;top:496px;color:#000;width:170px;overflow:hidden;">Gamma GmbH [5]</div>
<div class="t" style="left:202px;top:496px;color:#000;width:140px;overflow:hidden;">Frau Siggi Siegel</div>
<div class="t" style="left:352px;top:496px;color:#000;width:230px;overflow:hidden;">Rechnungsadresse</div>
<div class="t" style="left:592px;top:496px;color:#000;width:190px;overflow:hidden;">Gammastr. 89; 07545 Gera</div>
<div class="t" style="left:792px;top:496px;color:#000;width:590px;overflow:hidden;">Gera</div>
<div class="t" style="left:22px;top:516px;color:#000;width:170px;overflow:hidden;">Iota GmbH [10]</div>
<div class="t" style="left:202px;top:516px;color:#000;width:140px;overflow:hidden;">Herr Inge Meier</div>
<div class="t" style="left:352px;top:516px;color:#000;width:230px;overflow:hidden;">Rechnungsadresse</div>
<div class="t" style="left:592px;top:516px;color:#000;width:190px;overflow:hidden;">Iotastr. 73; 87509 Immenstadt</div>
<div class="t" style="left:792px;top:516px;color:#000;width:290px;overflow:hidden;">Immenstadt</div>
<div class="t" style="left:1092px;top:516px;color:#000;width:290px;overflow:hidden;">08562-5463<span class="x">xxx</span></div>
<div class="t" style="left:22px;top:536px;color:#000;width:170px;overflow:hidden;">Iota GmbH [10]</div>
<div class="t" style="left:202px;top:536px;color:#000;width:140px;overflow:hidden;">Herr Müller</div>
<div class="t" style="left:352px;top:536px;color:#000;width:230px;overflow:hidden;">Geschäftsleitung</div>
<div class="t" style="left:592px;top:536px;color:#000;width:190px;overflow:hidden;">Iotastr. 73; 87509 Immenstadt</div>
<div class="t" style="left:792px;top:536px;color:#000;width:190px;overflow:hidden;">Immenstadt</div>
<div class="t" style="left:992px;top:536px;color:#000;width:90px;overflow:hidden;">mueller@iota.de</div>
<div class="t" style="left:1092px;top:536px;color:#000;width:290px;overflow:hidden;">08526-4225<span class="x">xxx</span> / (M) 0162-4526<span class="x">xx</span></div>
<div class="t" style="left:22px;top:556px;color:#000;width:170px;overflow:hidden;">Kappa GmbH [12]</div>
<div class="t" style="left:202px;top:556px;color:#000;width:140px;overflow:hidden;">Herr Michael Schmidt</div>
<div class="t" style="left:352px;top:556px;color:#000;width:230px;overflow:hidden;">Firmenanschrift</div>
<div class="t" style="left:592px;top:556px;color:#000;width:190px;overflow:hidden;">Kappastr. 82; 50667 Köln</div>
<div class="t" style="left:792px;top:556px;color:#000;width:190px;overflow:hidden;">Köln</div>
<div class="t" style="left:992px;top:556px;color:#000;width:90px;overflow:hidden;">michael@kap...</div>
<div class="t" style="left:1092px;top:556px;color:#000;width:290px;overflow:hidden;">0531-5421<span class="x">xxx</span> / (M) 0172-222<span class="x">xxxx</span></div>
<div class="t" style="left:22px;top:576px;color:#000;width:170px;overflow:hidden;">Lambda GmbH [14]</div>
<div class="t" style="left:202px;top:576px;color:#000;width:140px;overflow:hidden;">Frau Luise Lamprecht</div>
<div class="t" style="left:352px;top:576px;color:#000;width:230px;overflow:hidden;">Firmenanschrift</div>
<div class="t" style="left:592px;top:576px;color:#000;width:190px;overflow:hidden;">Lambdastr. 12; 04103 Leipzig</div>
<div class="t" style="left:792px;top:576px;color:#000;width:190px;overflow:hidden;">Leipzig</div>
<div class="t" style="left:992px;top:576px;color:#000;width:90px;overflow:hidden;">luise@lambda....</div>
<div class="t" style="left:1092px;top:576px;color:#000;width:290px;overflow:hidden;">04352-5621<span class="x">xxx</span> / (M) 0162-2465<span class="x">xxx</span></div>
<div class="t" style="left:22px;top:596px;color:#000;width:170px;overflow:hidden;">Lambda GmbH [14]</div>
<div class="t" style="left:202px;top:596px;color:#000;width:140px;overflow:hidden;">Herr Leo Beispiel</div>
<div class="t" style="left:352px;top:596px;color:#000;width:230px;overflow:hidden;">Rechnungsadresse</div>
<div class="t" style="left:592px;top:596px;color:#000;width:190px;overflow:hidden;">Lambdastr. 89; 04103 Leipzig</div>
<div class="t" style="left:792px;top:596px;color:#000;width:590px;overflow:hidden;">Leipzig</div>
</body></html>
